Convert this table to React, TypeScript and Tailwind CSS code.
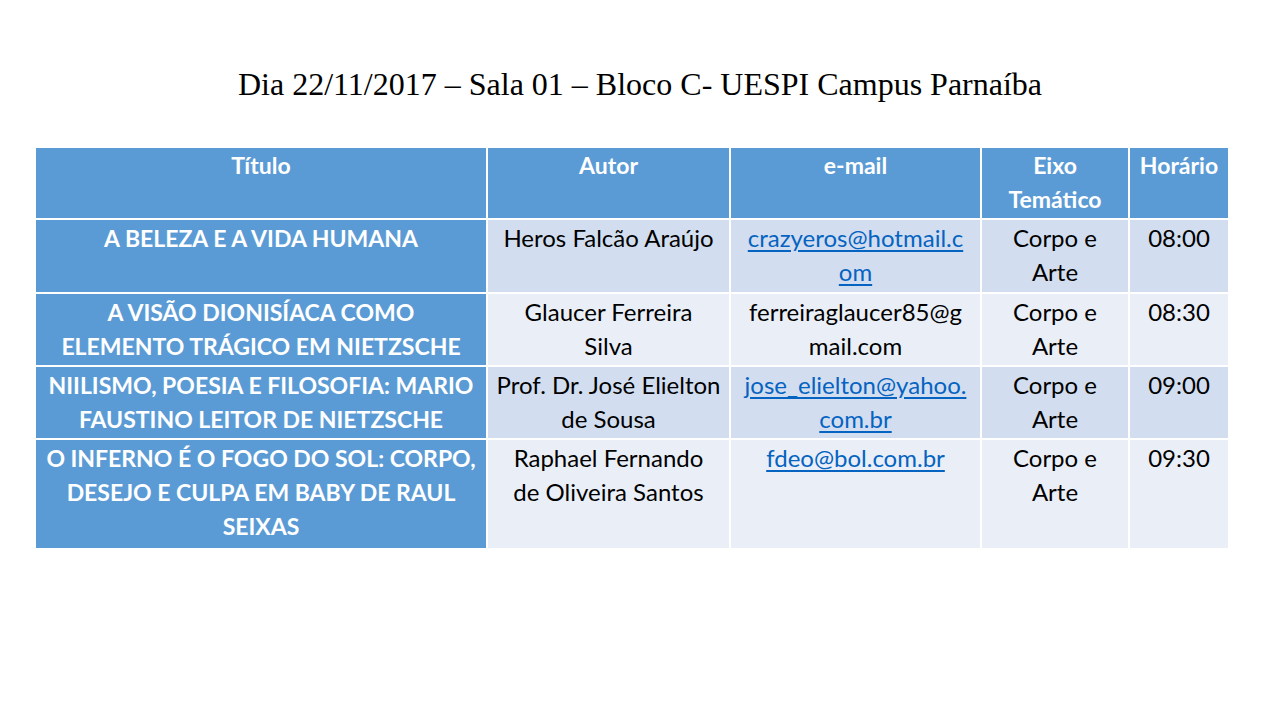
const rows = [
  {
    titulo: ["A BELEZA E A VIDA HUMANA"],
    autor: ["Heros Falcão Araújo"],
    email: ["crazyeros@hotmail.c", "om"],
    link: true,
    hora: "08:00",
    bg: "bg-[#d2deef]",
    h: "h-[72px]",
  },
  {
    titulo: ["A VISÃO DIONISÍACA COMO", "ELEMENTO TRÁGICO EM NIETZSCHE"],
    autor: ["Glaucer Ferreira", "Silva"],
    email: ["ferreiraglaucer85@g", "mail.com"],
    link: false,
    hora: "08:30",
    bg: "bg-[#eaeff7]",
    h: "h-[71px]",
  },
  {
    titulo: ["NIILISMO, POESIA E FILOSOFIA: MARIO", "FAUSTINO LEITOR DE NIETZSCHE"],
    autor: ["Prof. Dr. José Elielton", "de Sousa"],
    email: ["jose_elielton@yahoo.", "com.br"],
    link: true,
    hora: "09:00",
    bg: "bg-[#d2deef]",
    h: "h-[71px]",
  },
  {
    titulo: ["O INFERNO É O FOGO DO SOL: CORPO,", "DESEJO E CULPA EM BABY DE RAUL", "SEIXAS"],
    autor: ["Raphael Fernando", "de Oliveira Santos"],
    email: ["fdeo@bol.com.br"],
    link: true,
    hora: "09:30",
    bg: "bg-[#eaeff7]",
    h: "h-[108px]",
  },
];

function Lines({ lines, className }: { lines: string[]; className?: string }) {
  return (
    <>
      {lines.map((l, i) => (
        <span key={i} className={"block " + (className ?? "")}>
          {l}
        </span>
      ))}
    </>
  );
}

export default function App() {
  return (
    <div className="w-[1280px] h-[720px] bg-white relative overflow-hidden">
      <h1
        className="text-center pt-[64px] text-[32px] leading-[40px] text-black"
        style={{ fontFamily: '"Liberation Serif", "Times New Roman", serif' }}
      >
        Dia 22/11/2017 – Sala 01 – Bloco C- UESPI Campus Parnaíba
      </h1>

      <div
        className="ml-[36px] mt-[44px] w-[1192px] grid grid-cols-[450px_241px_249px_146px_98px] gap-[2px] bg-white text-[24px] leading-[34px]"
        style={{ fontFamily: 'Lato, "Open Sans", sans-serif' }}
      >
        {/* header */}
        <div className="bg-[#5b9bd5] h-[70px] text-white font-bold text-[23px] text-center">Título</div>
        <div className="bg-[#5b9bd5] text-white font-bold text-[23px] text-center">Autor</div>
        <div className="bg-[#5b9bd5] text-white font-bold text-[23px] text-center">e-mail</div>
        <div className="bg-[#5b9bd5] text-white font-bold text-[23px] text-center">
          <Lines lines={["Eixo", "Temático"]} />
        </div>
        <div className="bg-[#5b9bd5] text-white font-bold text-[23px] text-center">Horário</div>

        {rows.map((r, i) => (
          <div key={i} className="contents">
            <div className={"bg-[#5b9bd5] text-white font-bold text-[23px] text-center pt-[1px] " + r.h}>
              <Lines lines={r.titulo} />
            </div>
            <div className={r.bg + " text-black text-center pt-[1px]"}>
              <Lines lines={r.autor} />
            </div>
            <div className={r.bg + " text-center pt-[1px]"}>
              {r.email.map((l, j) => (
                <span key={j} className="block">
                  <span className={r.link ? "text-[#0563c1] underline underline-offset-[3px]" : "text-black"}>{l}</span>
                </span>
              ))}
            </div>
            <div className={r.bg + " text-black text-center pt-[1px]"}>
              <Lines lines={["Corpo e", "Arte"]} />
            </div>
            <div className={r.bg + " text-black text-center pt-[1px]"}>{r.hora}</div>
          </div>
        ))}
      </div>
    </div>
  );
}
